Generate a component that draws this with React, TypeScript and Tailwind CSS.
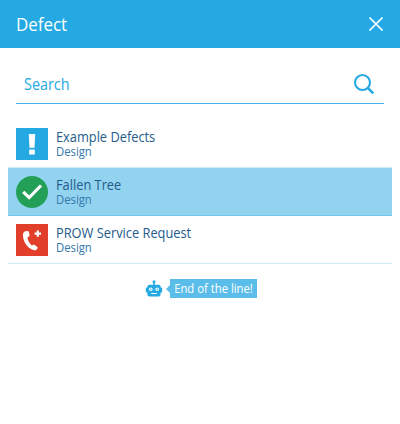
import type { ReactNode } from 'react';

type Defect = {
  name: string;
  stage: string;
  icon: ReactNode;
  selected?: boolean;
};

function ExclamationIcon() {
  return (
    <svg viewBox="0 0 32 32" className="w-8 h-8 shrink-0">
      <rect width="32" height="32" fill="#25a9e2" />
      <path d="M12.8 6 H19.2 L18.5 19.8 H13.5 Z" fill="#fff" />
      <rect x="13.2" y="21.4" width="5.6" height="5" rx="0.5" fill="#fff" />
    </svg>
  );
}

function TickIcon() {
  return (
    <svg viewBox="0 0 32 32" className="w-8 h-8 shrink-0">
      <circle cx="16" cy="16" r="16" fill="#249f58" />
      <path d="M7.2 15.8 L13.2 21.6 L25 9.5" fill="none" stroke="#fff" strokeWidth="3.2" />
    </svg>
  );
}

function PhoneIcon() {
  return (
    <svg viewBox="0 0 32 32" className="w-8 h-8 shrink-0">
      <rect width="32" height="32" fill="#e23f2b" />
      <path
        d="M9.4 7.3 L11.8 7 Q12.7 7 12.9 7.9 L13.6 11.2 Q13.7 12 13 12.4 L11.5 13.2 C11.8 16.6 13.4 19.3 15.8 21.4 L17.4 20.7 Q18.1 20.4 18.7 20.9 L21.3 22.9 Q22 23.5 21.5 24.2 L20.4 25.7 Q19.7 26.6 18.4 26.3 C11.8 24.8 7 18.2 7 11 Q7 7.7 9.4 7.3 Z"
        fill="#fff"
      />
      <path d="M21.8 6.4 V12.8 M18.6 9.6 H25" fill="none" stroke="#fff" strokeWidth="2.2" />
    </svg>
  );
}

function RobotIcon() {
  return (
    <svg viewBox="0 0 18 18" className="w-[18px] h-[18px]">
      <circle cx="9" cy="1.8" r="1.5" fill="#25a9e2" />
      <path d="M9 2 V6" stroke="#25a9e2" strokeWidth="1.6" />
      <rect x="2.4" y="4.8" width="13.2" height="11.6" rx="2" fill="#25a9e2" />
      <rect x="0.8" y="7.4" width="16.4" height="5" rx="1.2" fill="#25a9e2" />
      <circle cx="5.8" cy="9.3" r="1.8" fill="#fff" />
      <circle cx="12.2" cy="9.3" r="1.8" fill="#fff" />
      <circle cx="5.8" cy="9.3" r="0.7" fill="#25a9e2" />
      <circle cx="12.2" cy="9.3" r="0.7" fill="#25a9e2" />
      <path d="M6.2 13.5 H11.8" stroke="#fff" strokeWidth="1" />
    </svg>
  );
}

const defects: Defect[] = [
  { name: 'Example Defects', stage: 'Design', icon: <ExclamationIcon /> },
  { name: 'Fallen Tree', stage: 'Design', icon: <TickIcon />, selected: true },
  { name: 'PROW Service Request', stage: 'Design', icon: <PhoneIcon /> },
];

function DefectRow({ name, stage, icon, selected }: Defect) {
  return (
    <li
      className={`flex items-center gap-2 h-12 px-2 border-b ${
        selected ? 'bg-[#92d3ef] border-[#70c6eb]' : 'border-[#cfeaf8]'
      }`}
    >
      {icon}
      <div className="flex flex-col">
        <span className="origin-left scale-x-[0.915] text-[14px] leading-4 text-[#245b8b] whitespace-nowrap">{name}</span>
        <span className="origin-left scale-x-[0.94] text-[12px] leading-[14px] text-[#3478ae]">{stage}</span>
      </div>
    </li>
  );
}

export default function App() {
  return (
    <div className="w-full h-[424px] overflow-hidden bg-white font-['Open_Sans',sans-serif]">
      {/* Header */}
      <header className="flex items-center justify-between h-12 px-4 bg-[#25a9e2] text-white">
        <h1 className="origin-left scale-x-[0.94] text-[18px] leading-6">Defect</h1>
        <svg viewBox="0 0 16 16" className="w-4 h-4">
          <path d="M1.5 1.5 L14.5 14.5 M14.5 1.5 L1.5 14.5" stroke="#fff" strokeWidth="1.7" />
        </svg>
      </header>

      {/* Search */}
      <div className="flex items-start justify-between mx-4 mt-6 h-8 pl-2 pr-[9px] border-b border-[#46b5e6]">
        <span className="mt-0.5 origin-left scale-x-[0.9] text-[16px] leading-5 text-[#25a9e2]">Search</span>
        <svg viewBox="0 0 22 22" className="mt-px w-[22px] h-[22px]">
          <circle cx="9.5" cy="9.5" r="7.5" fill="none" stroke="#25a9e2" strokeWidth="2.1" />
          <path d="M14.8 14.9 L20.3 20.4" stroke="#25a9e2" strokeWidth="2.6" />
        </svg>
      </div>

      {/* Results */}
      <ul className="mx-2 mt-4">
        {defects.map((defect) => (
          <DefectRow key={defect.name} {...defect} />
        ))}
      </ul>

      {/* End of list */}
      <div className="flex items-center ml-[145px] mt-[15px]">
        <RobotIcon />
        <div className="ml-[3px] w-0 h-0 border-y-4 border-y-transparent border-r-4 border-r-[#5bbde9]" />
        <span className="w-[87px] h-[19px] bg-[#5bbde9] text-center text-white">
          <span className="block scale-x-[0.94] text-[12px] leading-[19px] whitespace-nowrap">End of the line!</span>
        </span>
      </div>
    </div>
  );
}
